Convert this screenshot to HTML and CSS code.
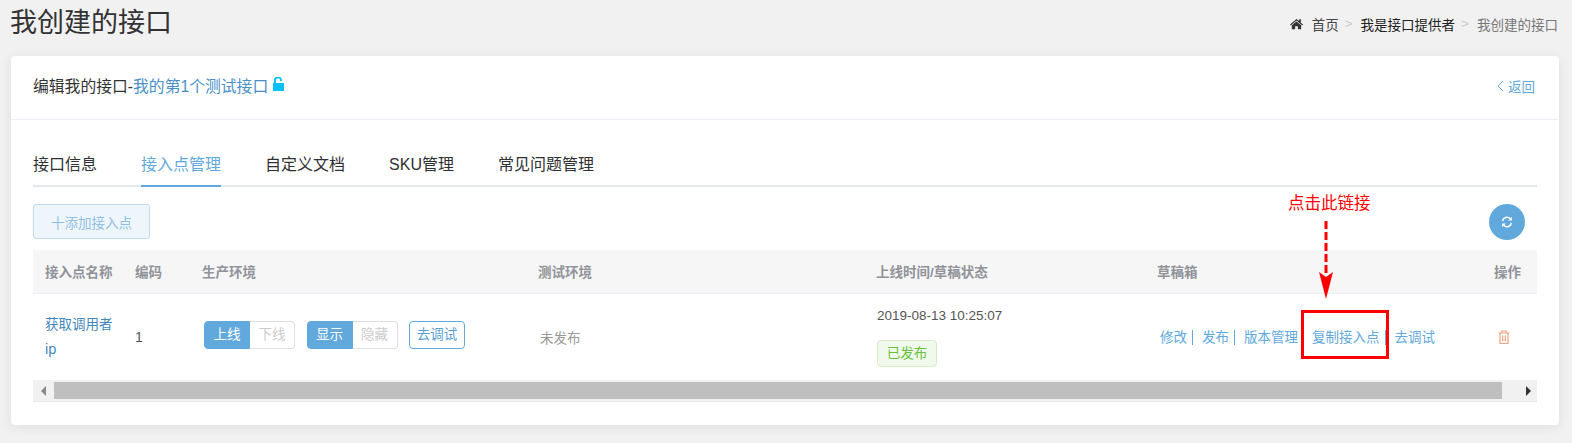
FILE: index.html
```html
<!DOCTYPE html>
<html lang="zh-CN">
<head>
    <meta charset="UTF-8">
    <title>我创建的接口</title>
    <link rel="stylesheet" href="styles.css">
</head>
<body>
    <header class="page-head">
        <h1 class="page-title">我创建的接口</h1>
        <nav class="crumbs">
            <svg class="home-icon" viewBox="0 0 14 12"><path d="M7 .6 0 6.6l.8.9L7 2.2l6.200 5.300.8-.9-2.300-2V1h-1.800v1.900z"/><path d="M7 3.200 2 7.400v4.200h3.500V8.300h3v3.300H12V7.400z"/></svg>
            <a class="crumb-home">首页</a>
            <span class="crumb-sep">&gt;</span>
            <a class="crumb-link">我是接口提供者</a>
            <span class="crumb-sep">&gt;</span>
            <span class="crumb-current">我创建的接口</span>
        </nav>
    </header>

    <main class="card">
        <div class="card-head">
            <div class="card-title">
                <span>编辑我的接口-<a class="link">我的第1个测试接口</a></span>
                <svg class="lock-icon" viewBox="0 0 11 14"><path d="M0 6h11v8H0z"/><path d="M2 6.500V3.500a3 3 0 0 1 6-.3v.8" fill="none" stroke="#00c0ff" stroke-width="2"/></svg>
            </div>
            <a class="back-link">
                <svg class="back-icon" viewBox="0 0 7 12"><path d="M6 1 1 6l5 5" fill="none" stroke="#61a9dc" stroke-width="1"/></svg>
                返回
            </a>
        </div>

        <div class="card-body">
            <div class="tabs">
                <a class="tab">接口信息</a>
                <a class="tab tab-active">接入点管理</a>
                <a class="tab">自定义文档</a>
                <a class="tab">SKU管理</a>
                <a class="tab">常见问题管理</a>
            </div>

            <div class="toolbar">
                <button class="add-btn">十添加接入点</button>
                <button class="refresh-btn">
                    <svg viewBox="0 0 12 12"><path d="M1.500 5A4.600 4.600 0 0 1 9.300 2.700" fill="none" stroke="#fff" stroke-width="1.500"/><path d="M10.800.8v3.600H7.200z" fill="#fff"/><path d="M10.500 7A4.600 4.600 0 0 1 2.700 9.300" fill="none" stroke="#fff" stroke-width="1.500"/><path d="M1.200 11.200V7.600h3.600z" fill="#fff"/></svg>
                </button>
            </div>

            <table class="api-table">
                <colgroup>
                    <col class="col-name"><col class="col-code"><col class="col-prod"><col class="col-test"><col class="col-time"><col class="col-draft"><col class="col-op">
                </colgroup>
                <thead>
                    <tr>
                        <th>接入点名称</th>
                        <th>编码</th>
                        <th>生产环境</th>
                        <th>测试环境</th>
                        <th>上线时间/草稿状态</th>
                        <th>草稿箱</th>
                        <th>操作</th>
                    </tr>
                </thead>
                <tbody>
                    <tr>
                        <td class="name-cell"><a class="name-link">获取调用者<span class="name-latin">ip</span></a></td>
                        <td class="code-cell">1</td>
                        <td>
                            <div class="env-controls">
                                <div class="switch"><span class="switch-on">上线</span><span class="switch-off">下线</span></div>
                                <div class="switch"><span class="switch-on">显示</span><span class="switch-off">隐藏</span></div>
                                <a class="debug-btn">去调试</a>
                            </div>
                        </td>
                        <td class="test-cell">未发布</td>
                        <td class="time-cell">
                            <div class="time-text">2019-08-13 10:25:07</div>
                            <span class="badge">已发布</span>
                        </td>
                        <td class="draft-cell">
                            <a class="draft-link sep">修改</a><a class="draft-link sep">发布</a><a class="draft-link">版本管理</a><a class="draft-link copy-link sep">复制接入点</a><a class="draft-link">去调试</a>
                        </td>
                        <td class="op-cell">
                            <svg class="trash-icon" viewBox="0 0 12 14"><path d="M.5 3h11M4 3V1h4v2M2 3v10.500h8V3M4.700 5.500v5.500M7.300 5.500v5.500" fill="none" stroke="#eea47f" stroke-width="1.200"/></svg>
                        </td>
                    </tr>
                </tbody>
            </table>

            <div class="scrollbar">
                <span class="arrow-left"></span>
                <div class="scroll-track"><div class="scroll-thumb"></div></div>
                <span class="arrow-right"></span>
            </div>
        </div>
    </main>

    <!-- 标注 -->
    <div class="note-text">点击此链接</div>
    <svg class="note-arrow" width="16" height="80" viewBox="0 0 16 80"><path d="M8 0v52" stroke="#f00" stroke-width="3" stroke-dasharray="8 3" fill="none"/><path d="M1 51 8 56l7-5-7 27z" fill="#f00"/></svg>
    <div class="note-box"></div>
</body>
</html>
```

FILE: styles.css
```css
:root {
    --blue: #61a9dc;
    --text: #333;
    --line: #e4e7ed;
}

* {
    margin: 0;
    padding: 0;
    box-sizing: border-box;
}

body {
    position: relative;
    height: 443px;
    overflow: hidden;
    background: #f1f1f1;
    color: var(--text);
    font-family: "Liberation Sans", "Noto Sans CJK SC", sans-serif;
    font-size: 14px;
}

/* 页头 */
.page-head {
    display: flex;
    justify-content: space-between;
    align-items: center;
    height: 56px;
    padding: 0 14px 7px 10px;
}

.page-title {
    font-size: 27px;
    font-weight: 400;
    line-height: 36px;
    margin-bottom: 4px;
}

.crumbs {
    display: flex;
    align-items: center;
    font-size: 13.500px;
    margin-bottom: 2px;
}

.home-icon {
    width: 13px;
    height: 12px;
    fill: #333;
    margin-right: 9px;
}

.crumb-home {
    color: #444;
}

.crumb-link {
    color: #222;
}

.crumb-current {
    color: #777;
}

.crumb-sep {
    color: #ccc;
    margin: 0 8px 0 6px;
}

/* 卡片 */
.card {
    width: 1548px;
    height: 369px;
    margin-left: 11px;
    background: #fff;
    border-radius: 4px;
    box-shadow: 0 2px 12px rgba(0, 0, 0, 0.08);
}

.card-head {
    display: flex;
    justify-content: space-between;
    align-items: center;
    height: 64px;
    padding: 0 24px 4px 22px;
    border-bottom: 1px solid #ebeef5;
}

.card-title {
    display: flex;
    align-items: center;
    font-size: 15.800px;
    color: #333;
}

.link {
    color: #4a90c8;
}

.lock-icon {
    width: 11px;
    height: 14px;
    margin-left: 5px;
    margin-top: -3px;
    fill: #00c0ff;
}

.back-link {
    display: flex;
    align-items: center;
    color: var(--blue);
    font-size: 13.500px;
}

.back-icon {
    width: 7px;
    height: 12px;
    margin-right: 4px;
}

.card-body {
    padding: 0 22px;
}

/* 标签页 */
.tabs {
    display: flex;
    gap: 44px;
    height: 67px;
    padding-top: 32px;
    border-bottom: 2px solid var(--line);
}

.tab {
    height: 35px;
    font-size: 16px;
    line-height: 25px;
    color: #303133;
    white-space: nowrap;
}

.tab-active {
    color: var(--blue);
    border-bottom: 2px solid var(--blue);
}

/* 工具栏 */
.toolbar {
    display: flex;
    justify-content: space-between;
    align-items: flex-start;
    height: 63px;
    padding: 17px 12px 0 0;
}

.add-btn {
    width: 117px;
    height: 35px;
    background: #eff6fb;
    border: 1px solid #bedcf2;
    border-radius: 3px;
    color: #8fc0e4;
    font-family: inherit;
    font-size: 13.500px;
}

.refresh-btn {
    display: flex;
    justify-content: center;
    align-items: center;
    width: 36px;
    height: 36px;
    background: var(--blue);
    border: none;
    border-radius: 50%;
}

.refresh-btn svg {
    width: 12px;
    height: 12px;
}

/* 表格 */
.api-table {
    width: 1504px;
    table-layout: fixed;
    border-collapse: collapse;
}

.col-name { width: 90px; }
.col-code { width: 67px; }
.col-prod { width: 336px; }
.col-test { width: 338px; }
.col-time { width: 281px; }
.col-draft { width: 337px; }
.col-op { width: 55px; }

.api-table th {
    height: 43px;
    padding-left: 12px;
    background: #f6f6f6;
    border-bottom: 1px solid #ebeef5;
    color: #909399;
    font-size: 13.500px;
    text-align: left;
}

.api-table td {
    height: 87px;
    padding-left: 12px;
    vertical-align: middle;
}

.name-link {
    color: #3f88bd;
    font-size: 13.500px;
    line-height: 25px;
    word-break: break-all;
    display: block;
    width: 70px;
}

.name-latin {
    font-size: 14.500px;
}

.code-cell {
    color: #555;
    font-size: 14px;
}

.env-controls {
    display: flex;
    align-items: center;
    gap: 11.500px;
    margin-left: 2px;
    margin-top: -4px;
    width: 280px;
}

.switch {
    display: flex;
    height: 28px;
    font-size: 13.500px;
    line-height: 26px;
    text-align: center;
}

.switch-on {
    width: 46px;
    background: var(--blue);
    border: 1px solid var(--blue);
    border-radius: 4px 0 0 4px;
    color: #fff;
}

.switch-off {
    width: 45px;
    background: #fff;
    border: 1px solid #dcdfe6;
    border-left: none;
    border-radius: 0 4px 4px 0;
    color: #ccc;
}

.debug-btn {
    width: 56px;
    height: 28px;
    border: 1px solid var(--blue);
    border-radius: 4px;
    color: #5a9fd0;
    font-size: 13.500px;
    line-height: 26px;
    text-align: center;
}

.test-cell {
    color: #999;
    font-size: 13.500px;
}

.api-table td.test-cell {
    padding-left: 14px;
}

.api-table td.time-cell {
    padding-left: 13px;
}

.time-text {
    color: #555;
    font-size: 13.500px;
    line-height: 20px;
    margin-bottom: 14px;
}

.badge {
    display: block;
    width: 60px;
    height: 27px;
    background: #f0f9eb;
    border: 1px solid #d9ecc8;
    border-radius: 4px;
    color: #67c23a;
    font-size: 13.500px;
    line-height: 25px;
    text-align: center;
}

.api-table td.draft-cell {
    padding-left: 15px;
    white-space: nowrap;
}

.draft-link {
    display: inline-block;
    color: var(--blue);
    font-size: 13.500px;
    line-height: 15px;
}

.draft-link.sep {
    padding-right: 5px;
    margin-right: 9px;
    border-right: 1px solid var(--blue);
}

.copy-link {
    margin-left: 14px;
}

.op-cell {
    text-align: left;
}

.trash-icon {
    display: block;
    width: 12px;
    height: 14px;
    margin-left: 4px;
}

/* 滚动条 */
.scrollbar {
    display: flex;
    align-items: center;
    width: 1504px;
    height: 22px;
    background: #f1f1f1;
    border-bottom: 1px solid #e8e8e8;
}

.arrow-left,
.arrow-right {
    width: 0;
    height: 0;
    border-top: 5px solid transparent;
    border-bottom: 5px solid transparent;
}

.arrow-left {
    margin-left: 8px;
    border-right: 5px solid #888;
}

.arrow-right {
    margin-right: 6px;
    border-left: 5px solid #333;
}

.scroll-track {
    flex: 1;
    padding: 0 24px 0 8px;
}

.scroll-thumb {
    height: 17px;
    background: #bfbfbf;
}

/* 标注 */
.note-text {
    position: absolute;
    left: 1288px;
    top: 191px;
    color: #f00;
    font-size: 16.500px;
    line-height: 24px;
}

.note-arrow {
    position: absolute;
    left: 1318px;
    top: 221px;
}

.note-box {
    position: absolute;
    left: 1301px;
    top: 310px;
    width: 88px;
    height: 49px;
    border: 3px solid #f00;
}
```
